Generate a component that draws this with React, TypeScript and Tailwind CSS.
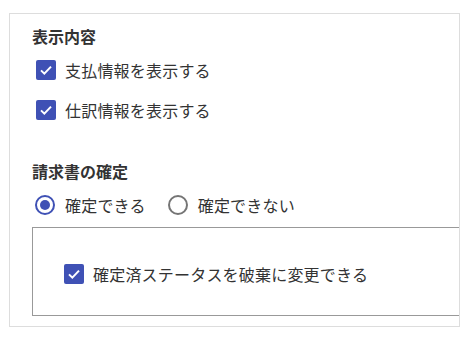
import { useState } from 'react'

function Checkbox({ checked, onChange, label }: { checked: boolean; onChange: () => void; label: string }) {
  return (
    <label className="flex items-center h-10 cursor-pointer select-none" onClick={onChange}>
      <span
        className={`ml-[4px] w-[20px] h-[20px] rounded-[2px] flex items-center justify-center ${
          checked ? 'bg-[#3f51b5]' : 'border-2 border-[#757575] bg-white'
        }`}
      >
        {checked && (
          <svg className="w-[16px] h-[16px]" viewBox="0 0 24 24" fill="none" stroke="white" strokeWidth={3}>
            <path d="M4.5 12.5l5 5L19.5 7" />
          </svg>
        )}
      </span>
      <span className="ml-[9px] text-[16px] tracking-[0.2px] text-[#333]">{label}</span>
    </label>
  )
}

function Radio({ checked, onChange, label }: { checked: boolean; onChange: () => void; label: string }) {
  return (
    <label className="flex items-center h-8 cursor-pointer select-none" onClick={onChange}>
      <span
        className={`w-[20px] h-[20px] rounded-full border-2 flex items-center justify-center ${
          checked ? 'border-[#3f51b5]' : 'border-[#757575]'
        }`}
      >
        {checked && <span className="w-[10px] h-[10px] rounded-full bg-[#3f51b5]" />}
      </span>
      <span className="ml-[10px] text-[16px] tracking-[0.2px] text-[#333]">{label}</span>
    </label>
  )
}

export default function App() {
  const [showPayment, setShowPayment] = useState(true)
  const [showJournal, setShowJournal] = useState(true)
  const [canConfirm, setCanConfirm] = useState(true)
  const [canRevert, setCanRevert] = useState(true)

  return (
    <div className="pl-[9px] pt-[13px] bg-white min-h-screen" style={{ fontFamily: '"Noto Sans CJK JP", "Noto Sans", sans-serif' }}>
      <div className="w-[451px] border border-[#dddddd] overflow-hidden pl-[22px] pt-[10px] pb-[10px]">
        {/* 表示内容 */}
        <h2 className="text-[16px] leading-6 font-bold text-[#333]">表示内容</h2>
        <div className="mt-[2px]">
          <Checkbox checked={showPayment} onChange={() => setShowPayment(!showPayment)} label="支払情報を表示する" />
          <Checkbox checked={showJournal} onChange={() => setShowJournal(!showJournal)} label="仕訳情報を表示する" />
        </div>

        {/* 請求書の確定 */}
        <h2 className="mt-[29px] text-[16px] leading-6 font-bold text-[#333]">請求書の確定</h2>
        <div className="mt-[6px] flex items-center gap-[22px] pl-[3px]">
          <Radio checked={canConfirm} onChange={() => setCanConfirm(true)} label="確定できる" />
          <Radio checked={!canConfirm} onChange={() => setCanConfirm(false)} label="確定できない" />
        </div>

        <div className="mt-[6px] w-[450px] h-[89px] border border-[#999] pl-[27px] flex items-center pt-[4px]">
          <Checkbox checked={canRevert} onChange={() => setCanRevert(!canRevert)} label="確定済ステータスを破棄に変更できる" />
        </div>
      </div>
    </div>
  )
}
